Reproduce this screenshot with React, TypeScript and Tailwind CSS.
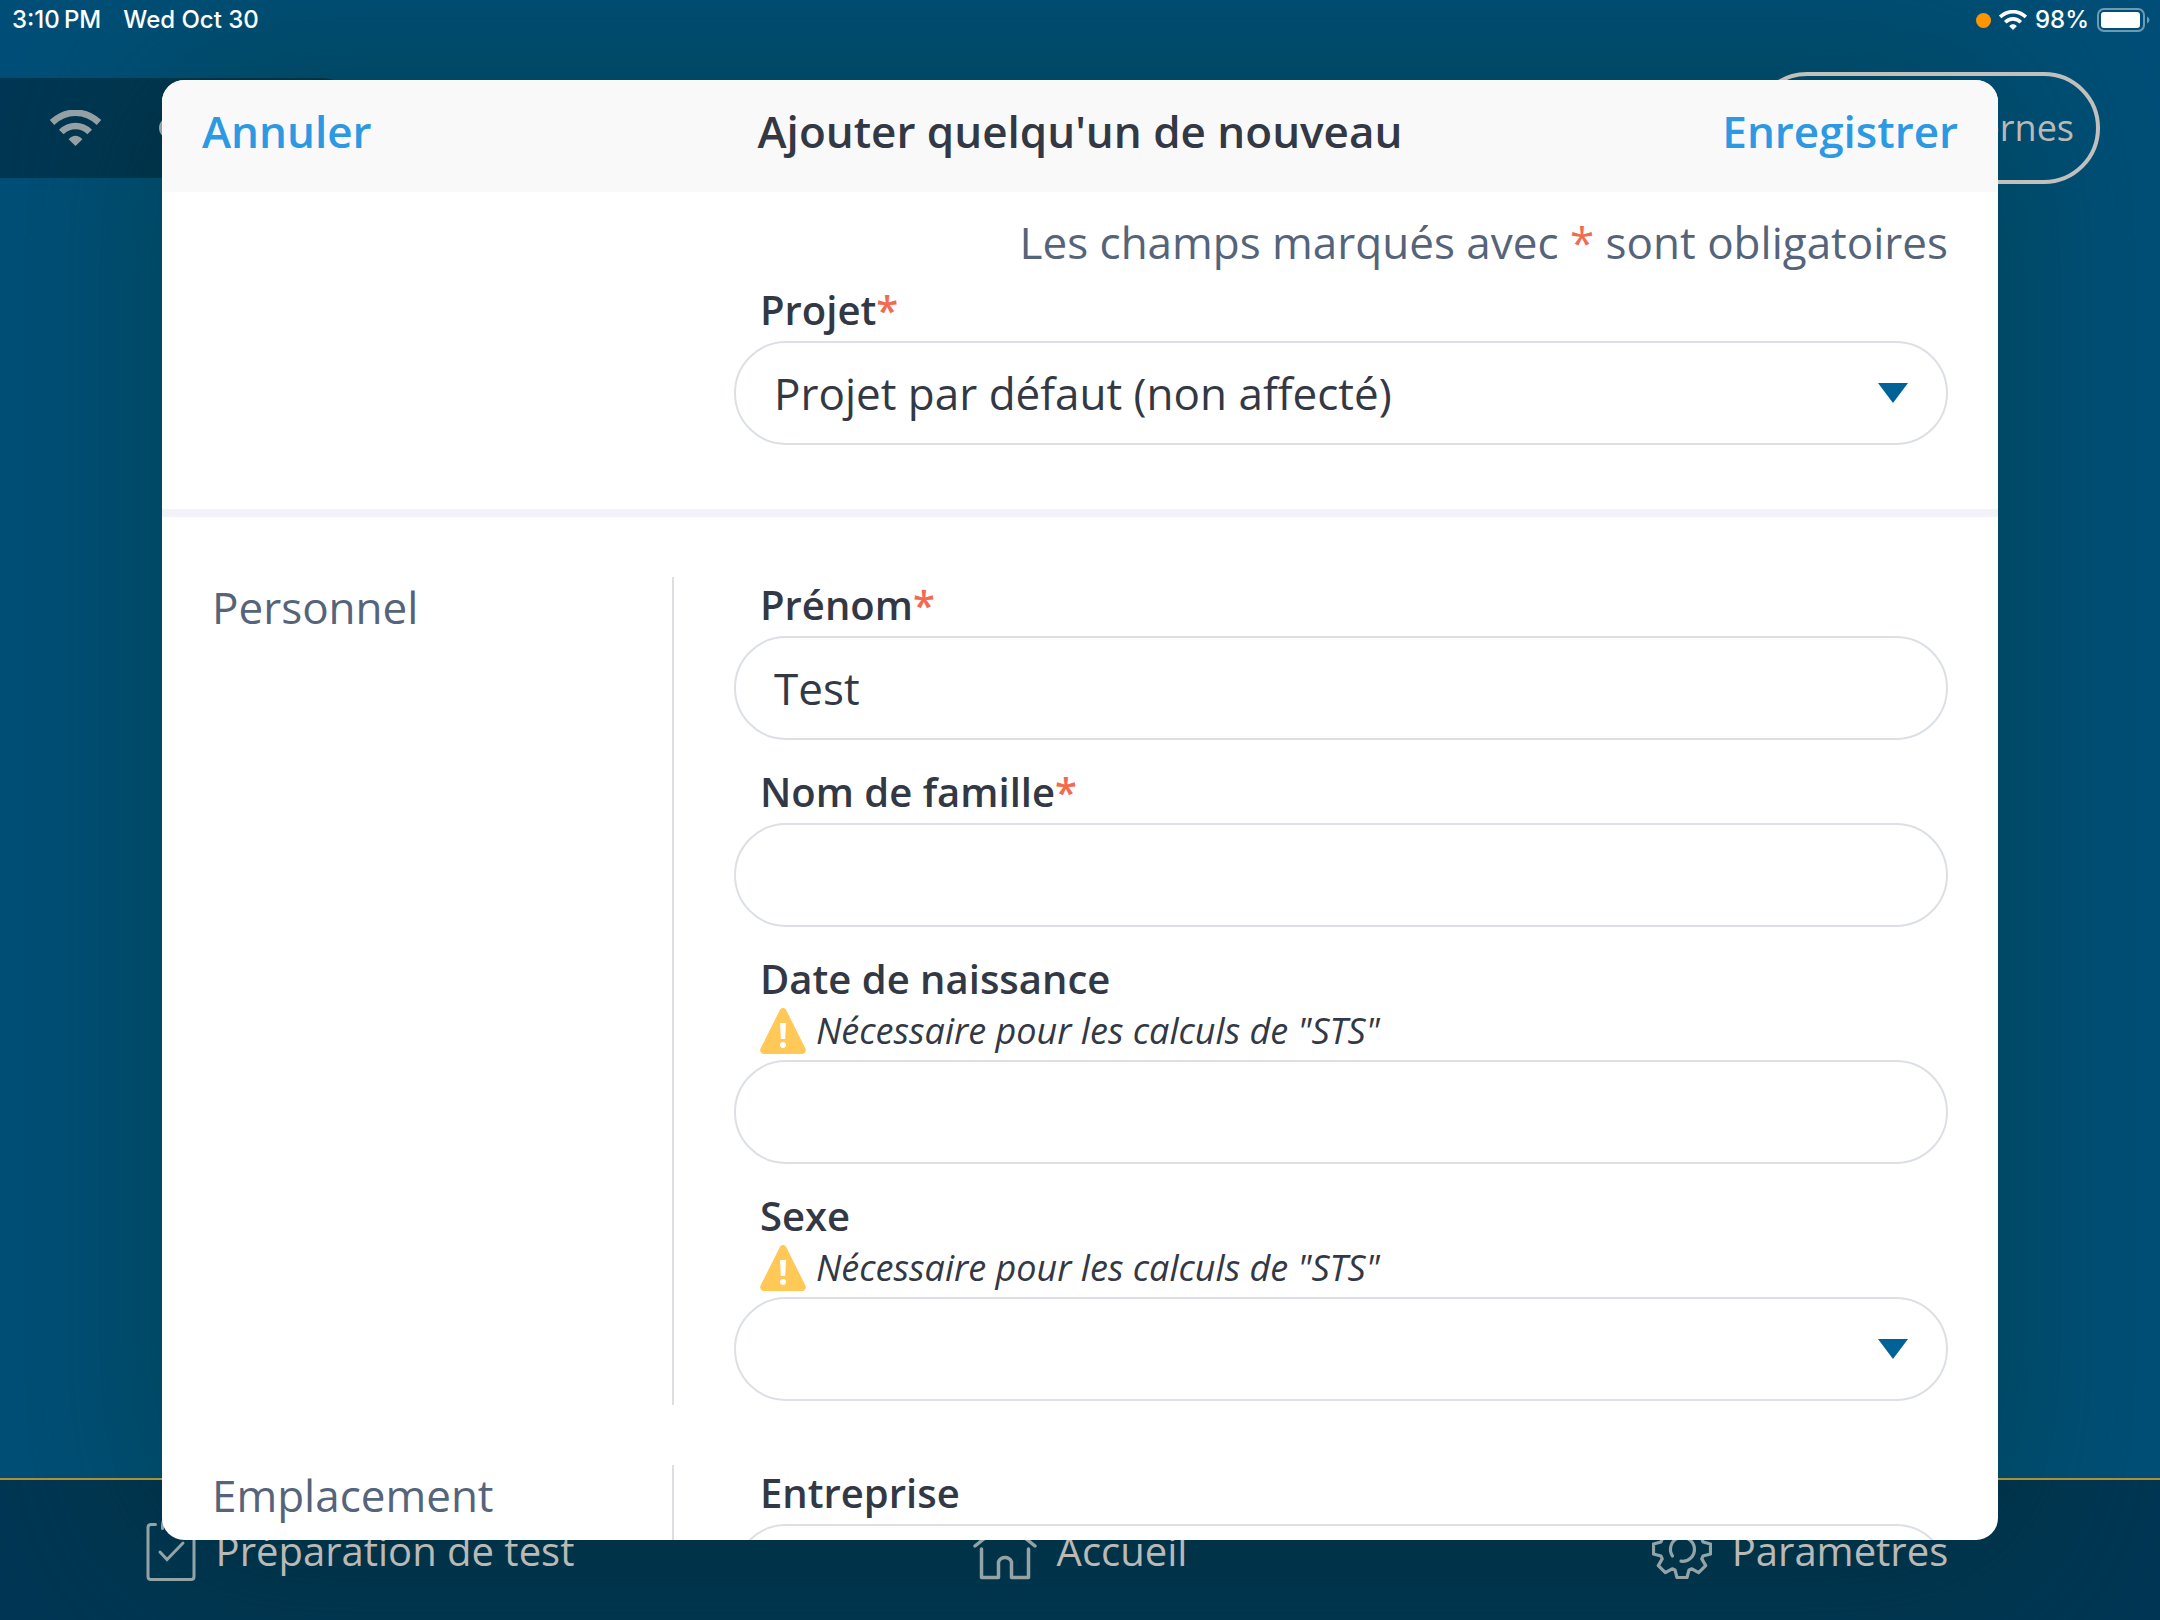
import React from 'react';
import type { ReactNode } from 'react';

interface IFieldProps {
  id: string;
  label: string;
  required?: boolean;
  warning?: string;
  children: ReactNode;
}

interface ISectionProps {
  title?: string;
  children: ReactNode;
}

const control =
  'block h-[104px] w-full appearance-none rounded-full border-2 border-[#dce0e5] bg-white px-[38px] text-[44px] text-[#333845] outline-none';

const WifiIcon = ({ className }: { className: string }) => (
  <svg viewBox="0 0 51 36" className={className} fill="none" aria-hidden="true">
    <path d="M2 12.500C16-.5 35-.5 49 12.500" stroke="currentColor" strokeWidth="6.600" />
    <path d="M11.300 22C19.500 14 31.500 14 39.700 22" stroke="currentColor" strokeWidth="6.600" />
    <path d="M25.500 36L18.600 29.200C22.400 24.500 28.600 24.500 32.400 29.200Z" fill="currentColor" />
  </svg>
);

const WarningIcon = () => (
  <svg viewBox="0 0 46 46" className="h-[46px] w-[46px] shrink-0" aria-hidden="true">
    <path
      d="M20 1.800C21.300-.6 24.700-.6 26 1.800L45.400 40.500C46.600 43 45 46 42 46H4C1 46-.6 43 .6 40.500Z"
      fill="#ffc857"
    />
    <path d="M20 15H26L25.200 31H20.800Z" fill="#fff" />
    <circle cx="23" cy="37" r="3" fill="#fff" />
  </svg>
);

const Caret = () => (
  <svg
    viewBox="0 0 30 20"
    className="pointer-events-none absolute top-[42px] right-10 h-5 w-[30px]"
    aria-hidden="true"
  >
    <path d="M0 0H30L15 20Z" fill="#006296" />
  </svg>
);

const ClipboardIcon = () => (
  <svg
    viewBox="0 1 50 66"
    className="h-[66px] w-[50px]"
    fill="none"
    stroke="#94a3a5"
    strokeWidth="3"
    strokeLinecap="round"
    aria-hidden="true"
  >
    <path d="M9.500 9.500H5Q2 9.500 2 12.500V61.500Q2 64.500 5 64.500H45Q48 64.500 48 61.500V12.500Q48 9.500 45 9.500H40.500" />
    <path d="M16.500 13.500V10Q16.500 3 23 3H27Q33.500 3 33.500 10V13.500" />
    <path d="M14 37L21 44.500L37 28" />
  </svg>
);

const HomeIcon = () => (
  <svg
    viewBox="0 -4 64 66"
    className="h-[66px] w-16"
    fill="none"
    stroke="#94a3a5"
    strokeWidth="3.500"
    strokeLinecap="round"
    strokeLinejoin="round"
    aria-hidden="true"
  >
    <path d="M2 26L32 2L62 26" />
    <path d="M8.500 29V57.500H25.500V42A7 7 0 0 1 38.500 42V57.500H55.500V29" />
  </svg>
);

const GearIcon = () => (
  <svg
    viewBox="0 -3 60 66"
    className="h-[66px] w-[60px]"
    fill="none"
    stroke="#94a3a5"
    strokeWidth="3.200"
    strokeLinecap="round"
    strokeLinejoin="round"
    aria-hidden="true"
  >
    <path d="M23 51L25 58.500H35L37 51L39.900 49.800L46.600 53.700L53.700 46.600L49.800 39.900L51 37L58.500 35V25L51 23L49.800 20.100L53.700 13.400L46.600 6.300L39.900 10.200L37 9L35 1.500H25L23 9L20.100 10.200L13.400 6.300L6.300 13.400L10.200 20.100L9 23L1.500 25V35L9 37L10.200 39.900L6.300 46.600L13.400 53.700L20.100 49.800Z" />
    <path d="M20.500 37A12 12 0 1 1 29 42.200" />
  </svg>
);

const Star = () => <span className="text-[#f26b50]">*</span>;

const Field = ({ id, label, required, warning, children }: IFieldProps) => (
  <div>
    <label
      htmlFor={id}
      className="block pl-[26px] text-[40px] leading-[56px] font-semibold text-[#333845]"
    >
      {label}
      {required && <Star />}
    </label>
    {warning && (
      <p className="flex h-[50px] items-center gap-2.5 pb-0.5 pl-[26px] text-[36px] leading-[48px] text-[#333845] italic">
        <WarningIcon />
        {warning}
      </p>
    )}
    <div className="relative mt-[3px]">{children}</div>
  </div>
);

const Section = ({ title, children }: ISectionProps) => (
  <section className="flex pr-[50px] pl-[50px]">
    <h2 className="w-[460px] shrink-0 text-[44px] leading-[60px] text-[#55647a]">{title}</h2>
    <div
      className={
        title
          ? 'grid grow gap-6 border-l-2 border-[#dddee2] pb-1 pl-[60px]'
          : 'grid grow gap-6 pb-1 pl-[62px]'
      }
    >
      {children}
    </div>
  </section>
);

const Backdrop = () => (
  <div className="relative flex h-full flex-col">
    <div className="flex h-[72px] items-start justify-between pt-1 pr-[9px] pl-3 text-[24px] leading-8 text-white">
      <div className="flex gap-[22px] font-['Inter',sans-serif] font-medium">
        <span>3:10{'\u2009'}PM</span>
        <span>Wed Oct 30</span>
      </div>
      <div className="flex items-center gap-2 font-['Inter',sans-serif] font-medium">
        <span className="h-[15px] w-[15px] rounded-full bg-[#ff9500]" />
        <WifiIcon className="h-5 w-7" />
        <span>98%</span>
        <svg viewBox="0 0 54 24" className="h-6 w-[54px]" aria-hidden="true">
          <rect x="1" y="1" width="46" height="22" rx="6" fill="none" stroke="#6f9bb0" strokeWidth="2" />
          <rect x="4" y="4" width="39" height="16" rx="3" fill="#fff" />
          <path d="M50 8.500Q52.500 9.500 52.500 12T50 15.500Z" fill="#6f9bb0" />
        </svg>
      </div>
    </div>

    <div className="flex grow items-start justify-between pr-[60px]">
      <div className="mt-1.5 flex h-[100px] w-[370px] items-center gap-[58px] rounded-r-full bg-black/30 pl-[50px] text-[#94a0a3]">
        <WifiIcon className="h-9 w-[51px]" />
        <span className="h-[22px] w-[22px] rounded-full bg-[#94a0a3]" />
      </div>
      <button className="h-28 rounded-full border-4 border-[#c2c0bc] px-[22px] text-[36px] whitespace-nowrap text-[#bab9b6]">
        Données internes
      </button>
    </div>

    <nav className="grid h-[142px] grid-cols-3 border-t-2 border-[#b38d33] bg-black/30 pt-9 text-[40px] leading-[70px] text-[#bab9b6]">
      <a href="#test" className="flex items-start justify-center gap-5">
        <ClipboardIcon />
        Préparation de test
      </a>
      <a href="#accueil" className="flex items-start justify-center gap-5">
        <HomeIcon />
        Accueil
      </a>
      <a href="#parametres" className="flex items-start justify-center gap-5">
        <GearIcon />
        Paramètres
      </a>
    </nav>
  </div>
);

const App = () => {
  return (
    <main className="relative h-screen overflow-hidden bg-[#004f78] font-['Open_Sans',sans-serif]">
      {/* soft shade around the dialog, kept under the page chrome */}
      <div className="absolute inset-0 px-[7.5%] py-20">
        <div className="h-full rounded-[22px] shadow-[0_0_180px_10px_rgba(0,62,64,0.6)]" />
      </div>

      <Backdrop />

      <div className="absolute inset-0 px-[7.5%] py-20">
        <div
          role="dialog"
          aria-labelledby="dialog-title"
          className="flex h-full flex-col overflow-hidden rounded-[22px] bg-white"
        >
          <header className="grid h-28 shrink-0 grid-cols-[1fr_auto_1fr] items-center bg-[#f9f9f9] px-10 pb-2.5 text-[44px] leading-[60px] font-semibold">
            <button className="justify-self-start text-[#2c99e2]">Annuler</button>
            <h1 id="dialog-title" className="text-[#333845]">
              Ajouter quelqu'un de nouveau
            </h1>
            <button className="justify-self-end text-[#2c99e2]">Enregistrer</button>
          </header>

          <form className="min-h-0 grow overflow-hidden">
            <p className="mt-5 mb-2.5 pr-[50px] text-right text-[44px] leading-[60px] text-[#55647a]">
              Les champs marqués avec <Star /> sont obligatoires
            </p>
            <Section>
              <Field id="projet" label="Projet" required>
                <select id="projet" className={control}>
                  <option>Projet par défaut (non affecté)</option>
                </select>
                <Caret />
              </Field>
            </Section>

            <hr className="my-[60px] h-2 border-0 bg-[#f2f2f8]" />

            <div className="grid gap-[60px]">
              <Section title="Personnel">
                <Field id="prenom" label="Prénom" required>
                  <input id="prenom" type="text" defaultValue="Test" className={control} />
                </Field>
                <Field id="nom" label="Nom de famille" required>
                  <input id="nom" type="text" className={control} />
                </Field>
                <Field
                  id="naissance"
                  label="Date de naissance"
                  warning={'Nécessaire pour les calculs de "STS"'}
                >
                  <input id="naissance" type="text" className={control} />
                </Field>
                <Field id="sexe" label="Sexe" warning={'Nécessaire pour les calculs de "STS"'}>
                  <select id="sexe" className={control} />
                  <Caret />
                </Field>
              </Section>

              <Section title="Emplacement">
                <Field id="entreprise" label="Entreprise">
                  <input id="entreprise" type="text" className={control} />
                </Field>
              </Section>
            </div>
          </form>
        </div>
      </div>
    </main>
  );
};

export default App;
